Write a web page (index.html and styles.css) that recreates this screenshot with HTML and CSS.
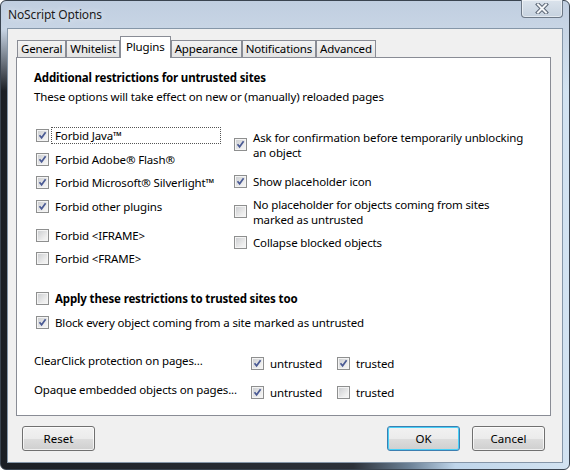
FILE: index.html
```html
<!DOCTYPE html>
<html lang="en">
<head>
    <meta charset="UTF-8">
    <title>NoScript Options</title>
    <link rel="stylesheet" href="styles.css">
</head>
<body>
    <div class="window">
        <div class="titlebar">
            <span class="title">NoScript Options</span>
            <div class="close">
                <svg width="14" height="11" viewBox="0 0 14 11">
                    <path d="M3 1.5 L11 9.5 M11 1.5 L3 9.5" stroke="#5b6675" stroke-width="4" stroke-linecap="square"/>
                    <path d="M3 1.5 L11 9.5 M11 1.5 L3 9.5" stroke="#f4f6f8" stroke-width="2" stroke-linecap="square"/>
                </svg>
            </div>
        </div>

        <div class="client">
            <div class="tabs">
                <div class="tab">General</div>
                <div class="tab">Whitelist</div>
                <div class="tab active">Plugins</div>
                <div class="tab">Appearance</div>
                <div class="tab">Notifications</div>
                <div class="tab">Advanced</div>
            </div>

            <div class="panel">
                <h2 class="heading">Additional restrictions for untrusted sites</h2>
                <p class="note">These options will take effect on new or (manually) reloaded pages</p>

                <div class="columns">
                    <div class="col col-left">
                        <label class="check">
                            <span class="cb on"><svg viewBox="0 0 9 9"><path d="M1.5 4.2 L3.6 6.8 L7.6 1.3"/></svg></span>
                            <span class="text focus">Forbid Java™</span>
                        </label>
                        <label class="check">
                            <span class="cb on"><svg viewBox="0 0 9 9"><path d="M1.5 4.2 L3.6 6.8 L7.6 1.3"/></svg></span>
                            <span class="text">Forbid Adobe® Flash®</span>
                        </label>
                        <label class="check">
                            <span class="cb on"><svg viewBox="0 0 9 9"><path d="M1.5 4.2 L3.6 6.8 L7.6 1.3"/></svg></span>
                            <span class="text">Forbid Microsoft® Silverlight™</span>
                        </label>
                        <label class="check">
                            <span class="cb on"><svg viewBox="0 0 9 9"><path d="M1.5 4.2 L3.6 6.8 L7.6 1.3"/></svg></span>
                            <span class="text">Forbid other plugins</span>
                        </label>
                        <label class="check group-start">
                            <span class="cb"></span>
                            <span class="text">Forbid &lt;IFRAME&gt;</span>
                        </label>
                        <label class="check">
                            <span class="cb"></span>
                            <span class="text">Forbid &lt;FRAME&gt;</span>
                        </label>
                    </div>

                    <div class="col col-right">
                        <label class="check">
                            <span class="cb on"><svg viewBox="0 0 9 9"><path d="M1.5 4.2 L3.6 6.8 L7.6 1.3"/></svg></span>
                            <span class="text">Ask for confirmation before temporarily unblocking<br>an object</span>
                        </label>
                        <label class="check group-start">
                            <span class="cb on"><svg viewBox="0 0 9 9"><path d="M1.5 4.2 L3.6 6.8 L7.6 1.3"/></svg></span>
                            <span class="text">Show placeholder icon</span>
                        </label>
                        <label class="check">
                            <span class="cb"></span>
                            <span class="text">No placeholder for objects coming from sites<br>marked as untrusted</span>
                        </label>
                        <label class="check">
                            <span class="cb"></span>
                            <span class="text">Collapse blocked objects</span>
                        </label>
                    </div>
                </div>

                <label class="check apply">
                    <span class="cb"></span>
                    <span class="text bold">Apply these restrictions to trusted sites too</span>
                </label>
                <label class="check block">
                    <span class="cb on"><svg viewBox="0 0 9 9"><path d="M1.5 4.2 L3.6 6.8 L7.6 1.3"/></svg></span>
                    <span class="text">Block every object coming from a site marked as untrusted</span>
                </label>

                <div class="opt-row first">
                    <span class="opt-label">ClearClick protection on pages...</span>
                    <div class="opt-checks">
                        <label class="check opt-check">
                            <span class="cb on"><svg viewBox="0 0 9 9"><path d="M1.5 4.2 L3.6 6.8 L7.6 1.3"/></svg></span>
                            <span class="text">untrusted</span>
                        </label>
                        <label class="check">
                            <span class="cb on"><svg viewBox="0 0 9 9"><path d="M1.5 4.2 L3.6 6.8 L7.6 1.3"/></svg></span>
                            <span class="text">trusted</span>
                        </label>
                    </div>
                </div>
                <div class="opt-row">
                    <span class="opt-label">Opaque embedded objects on pages...</span>
                    <div class="opt-checks">
                        <label class="check opt-check">
                            <span class="cb on"><svg viewBox="0 0 9 9"><path d="M1.5 4.2 L3.6 6.8 L7.6 1.3"/></svg></span>
                            <span class="text">untrusted</span>
                        </label>
                        <label class="check">
                            <span class="cb"></span>
                            <span class="text">trusted</span>
                        </label>
                    </div>
                </div>
            </div>

            <div class="buttons">
                <button class="btn">Reset</button>
                <span class="spacer"></span>
                <button class="btn default">OK</button>
                <button class="btn">Cancel</button>
            </div>
        </div>
    </div>
</body>
</html>
```

FILE: styles.css
```css
:root {
    --client-bg: #f0f0f0;
    --tab-border: #898c95;
    --text: #000000;
    --tick: #4a5a94;
}

* {
    margin: 0;
    padding: 0;
    box-sizing: border-box;
}

body {
    font-family: "Segoe UI", "Noto Sans", sans-serif;
    font-size: 11.5px;
    letter-spacing: -0.15px;
    line-height: 15px;
    color: var(--text);
    background: #ffffff;
}

.window {
    width: 570px;
    height: 470px;
    display: flex;
    flex-direction: column;
    padding: 0 6px 6px;
    border: 1px solid #3a4450;
    border-radius: 6px;
    background:
        linear-gradient(to bottom, #c0cee0 0, #c8d5e5 28px, rgba(200, 213, 229, 0) 90px),
        linear-gradient(to right, #1b1f25 0, #2c3139 62%, #6d8297 72%, #bfd5ea 80%, #d3e3f1 100%);
}

/* title bar */
.titlebar {
    height: 27px;
    display: flex;
    align-items: center;
    padding-left: 1px;
}

.title {
    font-size: 12px;
    color: #1b1b1b;
    text-shadow: 0 0 6px rgba(255, 255, 255, 0.8);
}

.close {
    margin-left: auto;
    align-self: flex-start;
    margin-top: -1px;
    width: 42px;
    height: 18px;
    display: flex;
    align-items: center;
    justify-content: center;
    border: 1px solid #6c7886;
    border-top: none;
    border-radius: 0 0 4px 4px;
    background: linear-gradient(to bottom, #dbe3ec, #c6d2df);
    box-shadow: inset 0 0 0 1px rgba(255, 255, 255, 0.5);
}

/* client area */
.client {
    flex: 1;
    display: flex;
    flex-direction: column;
    padding: 7px 11px 0 8px;
    background: var(--client-bg);
    border: 1px solid #8596a8;
}

.tabs {
    display: flex;
    align-items: flex-end;
    height: 21px;
    margin-left: 1px;
    position: relative;
    z-index: 1;
}

.tab {
    height: 17px;
    padding: 0 3px;
    line-height: 15px;
    border: 1px solid var(--tab-border);
    border-bottom: none;
    background: linear-gradient(to bottom, #f3f3f3, #e3e3e3);
    white-space: nowrap;
}

.tab.active {
    height: 22px;
    margin-bottom: -1px;
    padding: 3px 5px 0;
    line-height: 14px;
    background: #ffffff;
}

.panel {
    height: 359px;
    padding: 12px 17px 0;
    background: #ffffff;
    border: 1px solid var(--tab-border);
}

.heading {
    font-size: 11.5px;
    font-weight: bold;
    line-height: 15px;
}

.note {
    margin-top: 4px;
}

.columns {
    display: grid;
    grid-template-columns: 185px 1fr;
    column-gap: 13px;
    margin-top: 23px;
    margin-left: 2px;
}

.col {
    display: flex;
    flex-direction: column;
}

.col-left {
    gap: 6.5px;
}

.col-left .group-start {
    margin-top: 5.5px;
}

.col-right {
    gap: 6px;
    padding-top: 1.5px;
}

.col-right .group-start {
    margin-top: 6px;
}

/* checkbox rows */
.check {
    display: flex;
    align-items: center;
}

.cb {
    flex: none;
    width: 13px;
    height: 13px;
    display: flex;
    align-items: center;
    justify-content: center;
    border: 1px solid #8e8f8f;
    background: linear-gradient(135deg, #c9cbce 0, #eeeeee 70%, #f6f6f6 100%);
    box-shadow: inset 0 0 0 1px #f4f4f4;
}

.cb svg {
    width: 9px;
    height: 9px;
}

.cb svg path {
    fill: none;
    stroke: var(--tick);
    stroke-width: 1.7;
}

.text {
    margin-left: 2px;
    padding: 0 3px;
    border: 1px dotted transparent;
    line-height: 15px;
    white-space: nowrap;
}

.col-left .text {
    flex: 1;
}

.text.focus {
    border-color: #555555;
}

.bold {
    font-weight: bold;
}

.apply {
    margin: 23px 0 0 2px;
}

.block {
    margin: 7px 0 0 2px;
}

.opt-row {
    display: flex;
    align-items: flex-start;
    margin-top: 10px;
}

.opt-row.first {
    margin-top: 21.5px;
}

.opt-label {
    width: 217px;
    white-space: nowrap;
}

.opt-checks {
    display: flex;
    padding-top: 2px;
}

.opt-check {
    width: 86px;
}

/* dialog buttons */
.buttons {
    display: flex;
    gap: 12px;
    margin-top: 10px;
    padding: 0 6px;
}

.spacer {
    flex: 1;
}

.btn {
    width: 73px;
    height: 25px;
    font: inherit;
    color: #000000;
    border: 1px solid #707070;
    border-radius: 3px;
    background: linear-gradient(to bottom, #f2f2f2 0, #ebebeb 50%, #dddddd 50%, #cfcfcf 100%);
    box-shadow: inset 0 0 0 1px rgba(255, 255, 255, 0.7);
}

.btn.default {
    border-color: #3c7fb1;
    box-shadow: inset 0 0 0 1px #48d0f7;
}
```
